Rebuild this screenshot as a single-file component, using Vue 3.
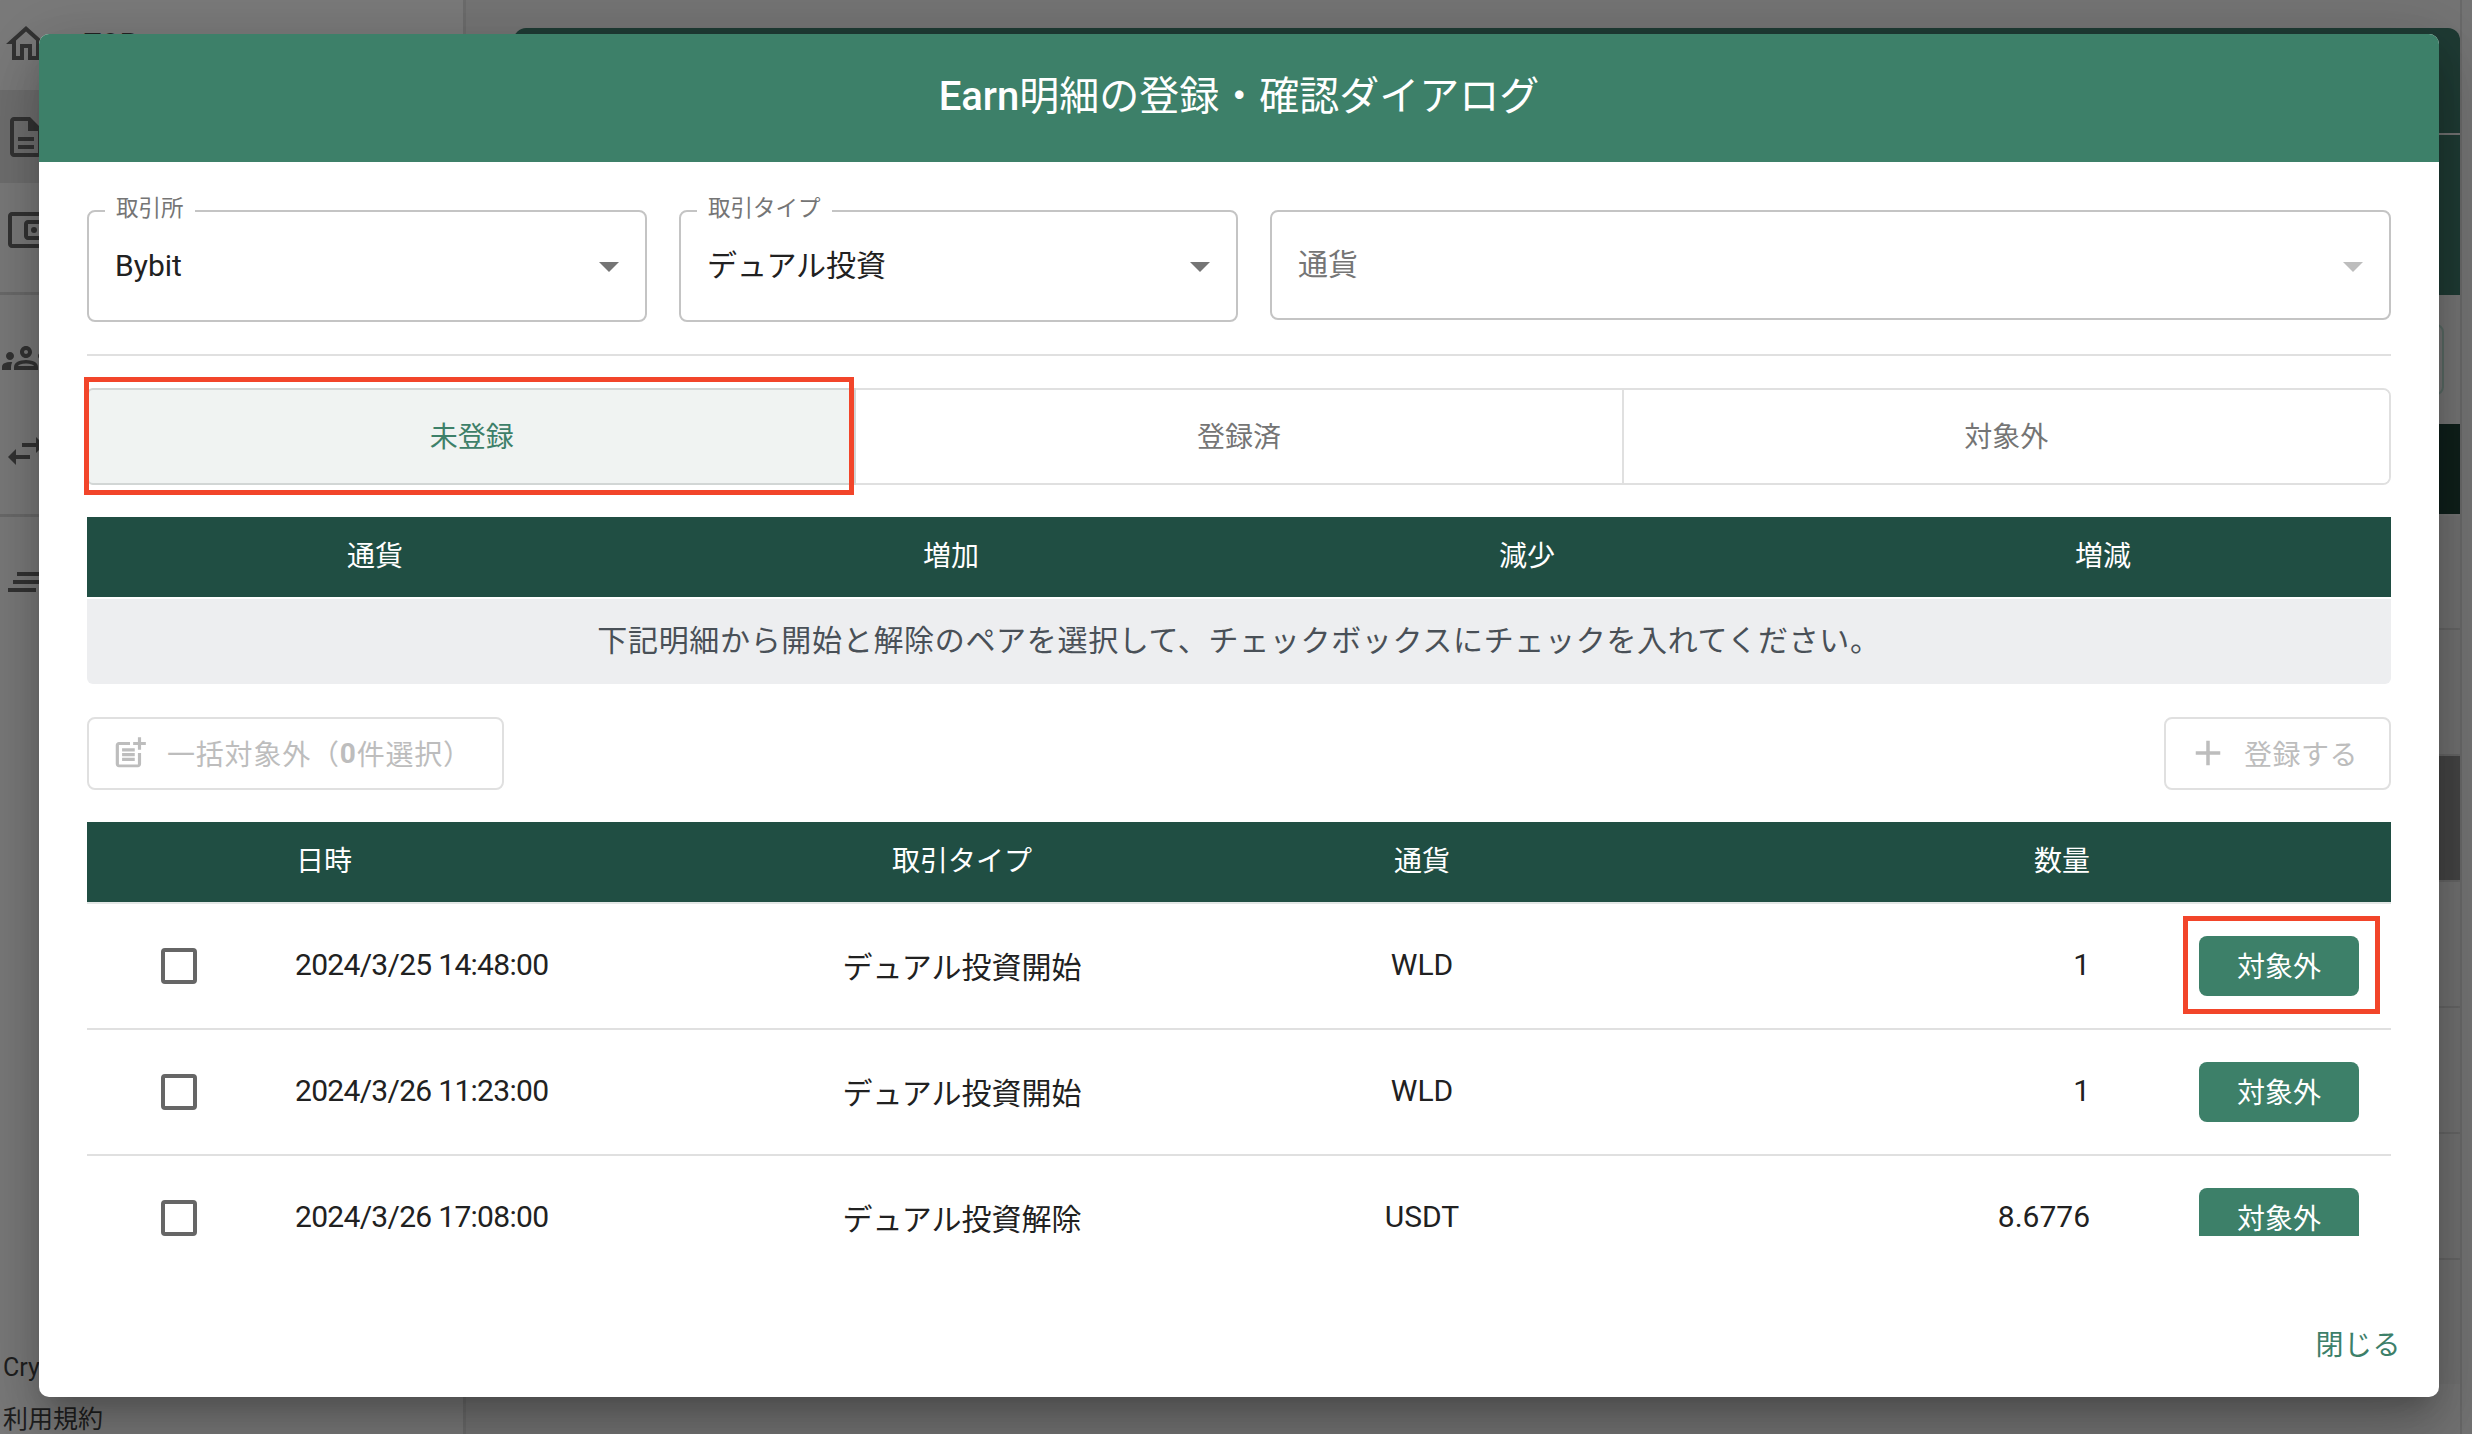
<template>
  <div class="page">
    <!-- 背景の画面 -->
    <aside class="sidebar">
      <nav class="nav-group top-group">
        <div class="nav-item">
          <svg class="nav-icon" viewBox="0 0 24 24"><path d="M12 5.69l5 4.5V18h-2v-6H9v6H7v-7.81l5-4.5M12 3L2 12h3v8h6v-6h2v6h6v-8h3L12 3z" /></svg>
          <span class="nav-label">TOP</span>
        </div>
        <div class="nav-item active">
          <svg class="nav-icon" viewBox="0 0 24 24"><path d="M8 16h8v2H8zm0-4h8v2H8zm6-10H6c-1.1 0-2 .9-2 2v16c0 1.1.89 2 1.99 2H18c1.1 0 2-.9 2-2V8l-6-6zm4 18H6V4h7v5h5v11z" /></svg>
        </div>
        <div class="nav-item">
          <svg class="nav-icon" viewBox="0 0 24 24"><path d="M21 7.28V5c0-1.1-.9-2-2-2H5c-1.11 0-2 .9-2 2v14c0 1.1.89 2 2 2h14c1.1 0 2-.9 2-2v-2.28c.59-.35 1-.98 1-1.72V9c0-.74-.41-1.37-1-1.72zM20 9v6h-7V9h7zM5 19V5h14v2h-6c-1.1 0-2 .9-2 2v6c0 1.1.9 2 2 2h6v2H5z" /><circle cx="16" cy="12" r="1.5" /></svg>
        </div>
      </nav>
      <nav class="nav-group middle-group">
        <div class="nav-item">
          <svg class="nav-icon" viewBox="0 0 24 24"><path d="M4 13c1.1 0 2-.9 2-2s-.9-2-2-2-2 .9-2 2 .9 2 2 2zm1.13 1.1C4.76 14.04 4.39 14 4 14c-.99 0-1.93.21-2.78.58C.48 14.9 0 15.62 0 16.43V18h4.5v-1.61c0-.83.23-1.61.63-2.29zM20 13c1.1 0 2-.9 2-2s-.9-2-2-2-2 .9-2 2 .9 2 2 2zm4 3.43c0-.81-.48-1.53-1.22-1.85-.85-.37-1.79-.58-2.78-.58-.39 0-.76.04-1.13.1.4.68.63 1.46.63 2.29V18H24v-1.57zM12 6c-1.66 0-3 1.34-3 3s1.34 3 3 3 3-1.34 3-3-1.34-3-3-3zm0 4c-.55 0-1-.45-1-1s.45-1 1-1 1 .45 1 1-.45 1-1 1zm0 3c-1.63 0-3.07.39-4.24.9C6.68 14.38 6 15.46 6 16.63V18h12v-1.37c0-1.17-.68-2.25-1.76-2.73C15.07 13.39 13.63 13 12 13zm-3.92 3c.09-.23.13-.39.91-.69.97-.38 1.99-.56 3.01-.56s2.04.18 3.01.56c.77.3.81.46.91.69H8.08z" /></svg>
        </div>
        <div class="nav-item">
          <svg class="nav-icon" viewBox="0 0 24 24"><path d="M6.99 11L3 15l3.99 4v-3H14v-2H6.99v-3zM21 9l-3.99-4v3H10v2h7.01v3L21 9z" /></svg>
        </div>
      </nav>
      <nav class="nav-group last-group">
        <div class="nav-item">
          <svg class="nav-icon" viewBox="0 0 24 24"><path d="M7.5 7h14v2h-14zM5.5 11h14v2h-14zM3 15h14v2H3z" /></svg>
        </div>
      </nav>
      <div class="side-footer">
        <p class="brand">Crypto</p>
        <p class="terms">利用規約</p>
      </div>
    </aside>

    <main class="main">
      <div class="back-content">
        <div class="back-head"></div>
        <div class="back-green"></div>
        <div class="back-search"><span class="back-field"></span></div>
        <div class="back-dark"></div>
        <div class="back-row first"></div>
        <div class="back-row"></div>
        <div class="back-row selected"></div>
        <div class="back-row"></div>
        <div class="back-row"></div>
        <div class="back-row"></div>
        <div class="back-row last"><span class="back-chip"></span><span class="back-tick"></span></div>
      </div>
      <div class="gutter"></div>
    </main>

    <!-- ダイアログ -->
    <section class="dialog">
      <header class="dialog-title"><span class="title-latin">Earn</span>明細の登録・確認ダイアログ</header>

      <div class="dialog-body">
        <div class="filters">
          <div class="select exchange">
            <label class="select-label">取引所</label>
            <span class="select-value">Bybit</span>
            <i class="arrow"></i>
          </div>
          <div class="select type">
            <label class="select-label">取引タイプ</label>
            <span class="select-value">デュアル投資</span>
            <i class="arrow"></i>
          </div>
          <div class="select currency">
            <span class="select-value placeholder">通貨</span>
            <i class="arrow light"></i>
          </div>
        </div>

        <hr class="divider" />

        <div class="tabs">
          <button class="tab active">未登録</button>
          <button class="tab">登録済</button>
          <button class="tab">対象外</button>
          <span class="mark mark-tab"></span>
        </div>

        <div class="summary-head">
          <span>通貨</span>
          <span>増加</span>
          <span>減少</span>
          <span>増減</span>
        </div>
        <div class="summary-note">下記明細から開始と解除のペアを選択して、チェックボックスにチェックを入れてください。</div>

        <div class="actions">
          <button class="outline-btn bulk" disabled>
            <svg class="btn-icon" viewBox="0 0 24 24"><path d="M17 19.22H5V7h7V5H5c-1.1 0-2 .9-2 2v12c0 1.1.9 2 2 2h12c1.1 0 2-.9 2-2v-7h-2v7.22zM19 2h-2v3h-3c.01.01 0 2 0 2h3v2.99c.01.01 2 0 2 0V7h3V5h-3V2zM7 9h8v2H7zM7 12v2h8v-2h-3zM7 15h8v2H7z" /></svg>
            一括対象外（<b>0</b>件選択）
          </button>
          <button class="outline-btn register" disabled>
            <svg class="btn-icon plus" viewBox="0 0 24 24"><path d="M19 13h-6v6h-2v-6H5v-2h6V5h2v6h6v2z" /></svg>
            登録する
          </button>
        </div>

        <div class="table-wrap">
          <div class="table-head grid-row">
            <span></span>
            <span>日時</span>
            <span class="center">取引タイプ</span>
            <span class="center">通貨</span>
            <span class="right">数量</span>
            <span></span>
          </div>
          <div v-for="(row, i) in rows" :key="row.date" class="table-row grid-row">
            <span class="center check-cell"><input type="checkbox" class="check" /></span>
            <span class="cell date-cell">{{ row.date }}</span>
            <span class="cell center">{{ row.type }}</span>
            <span class="cell center">{{ row.currency }}</span>
            <span class="cell right">{{ row.amount }}</span>
            <span class="action-cell">
              <span class="exclude-wrap">
                <button class="exclude-btn">対象外</button>
                <span v-if="i === 0" class="mark mark-btn"></span>
              </span>
            </span>
          </div>
        </div>
      </div>

      <footer class="dialog-footer">
        <button class="close-btn">閉じる</button>
      </footer>
    </section>
  </div>
</template>

<script setup>
const rows = [
  { date: '2024/3/25 14:48:00', type: 'デュアル投資開始', currency: 'WLD', amount: '1' },
  { date: '2024/3/26 11:23:00', type: 'デュアル投資開始', currency: 'WLD', amount: '1' },
  { date: '2024/3/26 17:08:00', type: 'デュアル投資解除', currency: 'USDT', amount: '8.6776' }
]
</script>

<style>
body {
  margin: 0;
  background: #757575;
}
</style>

<style scoped>
.page {
  position: relative;
  display: flex;
  width: 2472px;
  height: 1434px;
  overflow: hidden;
  background: #757575;
  font-family: Roboto, "Noto Sans CJK JP", sans-serif;
  color: #212121;
}

/* 背景 */
.sidebar {
  display: flex;
  flex-direction: column;
  width: 463px;
  border-right: 3px solid #6c6c6c;
  background: #7a7a7a;
}

.nav-group {
  padding: 0 0 19px;
  border-bottom: 3px solid #6a6a6a;
}

.top-group {
  margin-top: -3px;
  padding-bottom: 16px;
}

.nav-group + .nav-group {
  padding-top: 16px;
}

.middle-group {
  padding-bottom: 17px;
}

.nav-group.last-group {
  padding-top: 18px;
  border-bottom: none;
}

.nav-item {
  display: flex;
  align-items: center;
  gap: 34px;
  height: 93px;
  padding-left: 2px;
}

.nav-item.active {
  background: #6f6f6f;
}

.nav-icon {
  width: 48px;
  height: 48px;
  fill: #333;
}

.nav-label {
  font-size: 28px;
  font-weight: 500;
  color: #222;
}

.side-footer {
  margin-top: auto;
  padding: 0 0 0 3px;
  font-size: 25px;
  color: #1f1f1f;
}

.side-footer p {
  margin: 0;
}

.brand {
  line-height: 36px;
}

.terms {
  margin-top: 20px !important;
  line-height: 28px;
}

.main {
  display: flex;
  flex: 1;
  background: #747474;
}

.back-content {
  flex: 1;
  margin-left: 48px;
  padding-top: 28px;
}

.back-head {
  height: 105px;
  border-radius: 12px 12px 0 0;
  background: #1f3b34;
}

.back-green {
  height: 160px;
  margin-top: 2px;
  background: #1f3b34;
}

.back-search {
  display: flex;
  justify-content: flex-end;
  align-items: center;
  height: 129px;
  padding-right: 16px;
  box-sizing: border-box;
  background: #757575;
}

.back-field {
  width: 200px;
  height: 71px;
  border: 2px solid #5a6b66;
  border-radius: 8px;
  box-sizing: border-box;
}

.back-dark {
  height: 90px;
  background: #0f201b;
}

.back-row {
  position: relative;
  height: 124px;
  border-bottom: 2px solid #666;
  background: #717171;
}

.back-row.first {
  height: 112px;
  margin-top: 2px;
}

.back-row.selected {
  background: #454545;
}

.back-row.last {
  border-bottom: none;
}

.back-chip {
  position: absolute;
  left: 1377px;
  top: 31px;
  width: 64px;
  height: 60px;
  border-radius: 10px;
  background: #5f5f5f;
}

.back-tick {
  position: absolute;
  left: 1524px;
  top: 43px;
  width: 2px;
  height: 10px;
  background: #4e4e4e;
}

.gutter {
  width: 10px;
  border-left: 2px solid #696969;
  background: #747474;
}

/* ダイアログ */
.dialog {
  position: absolute;
  left: 39px;
  top: 34px;
  display: flex;
  flex-direction: column;
  width: 2400px;
  height: 1363px;
  overflow: hidden;
  border-radius: 10px;
  background: #fff;
  box-shadow: 0 16px 24px -10px rgba(0, 0, 0, 0.2), 0 36px 58px 4px rgba(0, 0, 0, 0.14), 0 14px 70px 12px rgba(0, 0, 0, 0.12);
}

.dialog-title {
  height: 128px;
  background: #3d8069;
  color: #fff;
  font-size: 40px;
  line-height: 126px;
  text-align: center;
}

.title-latin {
  font-weight: 500;
}

.dialog-body {
  padding: 48px 48px 0;
}

.filters {
  display: flex;
  align-items: flex-start;
  gap: 32px;
  height: 112px;
  margin-bottom: 32px;
}

.select {
  position: relative;
  display: flex;
  align-items: center;
  height: 112px;
  padding: 0 26px;
  border: 2px solid #c4c4c4;
  border-radius: 8px;
  box-sizing: border-box;
}

.exchange {
  width: 560px;
}

.type {
  width: 559px;
}

.currency {
  flex: 1;
  height: 110px;
}

.select-label {
  position: absolute;
  left: 16px;
  top: -20px;
  padding: 0 11px;
  background: #fff;
  color: #757575;
  font-size: 22.5px;
  line-height: 32px;
}

.select-value {
  font-size: 30px;
  line-height: 44px;
}

.placeholder {
  color: #757575;
}

.arrow {
  position: absolute;
  right: 26px;
  top: 50px;
  width: 0;
  height: 0;
  border-left: 10px solid transparent;
  border-right: 10px solid transparent;
  border-top: 10px solid #757575;
}

.arrow.light {
  border-top-color: #bdbdbd;
}

.divider {
  height: 2px;
  margin: 0 0 32px;
  border: none;
  background: #e0e0e0;
}

.tabs {
  position: relative;
  display: flex;
  height: 97px;
  margin-bottom: 32px;
  border: 2px solid #e0e0e0;
  border-radius: 8px;
  box-sizing: border-box;
}

.tab {
  flex: 1;
  padding: 0 0 3px;
  border: none;
  background: #fff;
  color: #757575;
  font-family: inherit;
  font-size: 28px;
  border-right: 2px solid #e0e0e0;
}

.tab:first-child {
  border-radius: 6px 0 0 6px;
}

.tab:nth-child(3) {
  border-right: none;
  border-radius: 0 6px 6px 0;
}

.tab.active {
  margin: -2px 0 -2px -2px;
  border: 2px solid #d2d6d5;
  background: #f0f3f2;
  color: #3d8069;
}

.mark {
  position: absolute;
  border: 5px solid #f2452a;
  box-sizing: border-box;
  pointer-events: none;
}

.mark-tab {
  left: -5px;
  top: -13px;
  width: 770px;
  height: 118px;
}

.summary-head {
  display: grid;
  grid-template-columns: repeat(4, 1fr);
  height: 80px;
  background: #204e43;
  color: #fff;
  font-size: 28px;
  line-height: 80px;
  text-align: center;
}

.summary-note {
  height: 85px;
  margin-top: 2px;
  margin-bottom: 33px;
  border-radius: 0 0 6px 6px;
  background: #edeef0;
  color: #495057;
  font-size: 30px;
  letter-spacing: 0.68px;
  line-height: 83px;
  text-align: center;
}

.actions {
  display: flex;
  justify-content: space-between;
  margin-bottom: 32px;
}

.outline-btn {
  display: flex;
  align-items: center;
  height: 73px;
  padding-bottom: 2px !important;
  border: 2px solid #e0e0e0;
  border-radius: 8px;
  background: #fff;
  color: #bdbdbd;
  font-family: inherit;
  font-size: 28px;
  white-space: nowrap;
}

.outline-btn b {
  font-weight: 700;
}

.bulk {
  width: 417px;
  padding-left: 22px;
  letter-spacing: 0.8px;
}

.register {
  width: 227px;
  padding-left: 21px;
  letter-spacing: 0.5px;
}

.btn-icon {
  width: 38px;
  height: 38px;
  margin-right: 18px;
  fill: #bdbdbd;
}

.plus {
  width: 42px;
  height: 42px;
  margin-right: 15px;
}

.table-wrap {
  height: 414px;
  overflow: hidden;
}

.grid-row {
  display: grid;
  grid-template-columns: 209px 356px 620px 300px 518px 301px;
  align-items: center;
}

.center {
  text-align: center;
}

.right {
  text-align: right;
}

.table-head {
  height: 80px;
  margin-bottom: 2px;
  background: #204e43;
  box-shadow: 0 2px 0 #e3e7e6;
  color: #fff;
  font-size: 28px;
  line-height: 80px;
}

.table-row {
  height: 126px;
  border-bottom: 2px solid #e0e0e0;
  box-sizing: border-box;
  font-size: 30px;
}

.cell {
  margin-top: -3px;
}

.date-cell {
  margin-left: -1px;
  letter-spacing: -0.7px;
}

.check-cell {
  display: flex;
  justify-content: center;
  padding-right: 26px;
}

.check {
  width: 36px;
  height: 36px;
  margin: 0;
  border: 4px solid #666;
  border-radius: 4px;
  background: #fff;
  appearance: none;
}

.action-cell {
  display: flex;
  justify-content: flex-end;
  padding-right: 32px;
}

.exclude-wrap {
  position: relative;
  display: block;
}

.exclude-btn {
  display: block;
  width: 160px;
  height: 60px;
  padding: 0 0 2px;
  border: none;
  border-radius: 8px;
  background: #3d8069;
  color: #fff;
  font-family: inherit;
  font-size: 28px;
}

.mark-btn {
  left: -16px;
  top: -20px;
  right: -21px;
  bottom: -18px;
}

.dialog-footer {
  display: flex;
  justify-content: flex-end;
  margin-top: auto;
  padding: 0 38px 31px 0;
}

.close-btn {
  padding: 0;
  border: none;
  background: none;
  color: #3d8069;
  font-family: inherit;
  font-size: 28px;
  letter-spacing: 0.5px;
  line-height: 40px;
}
</style>
